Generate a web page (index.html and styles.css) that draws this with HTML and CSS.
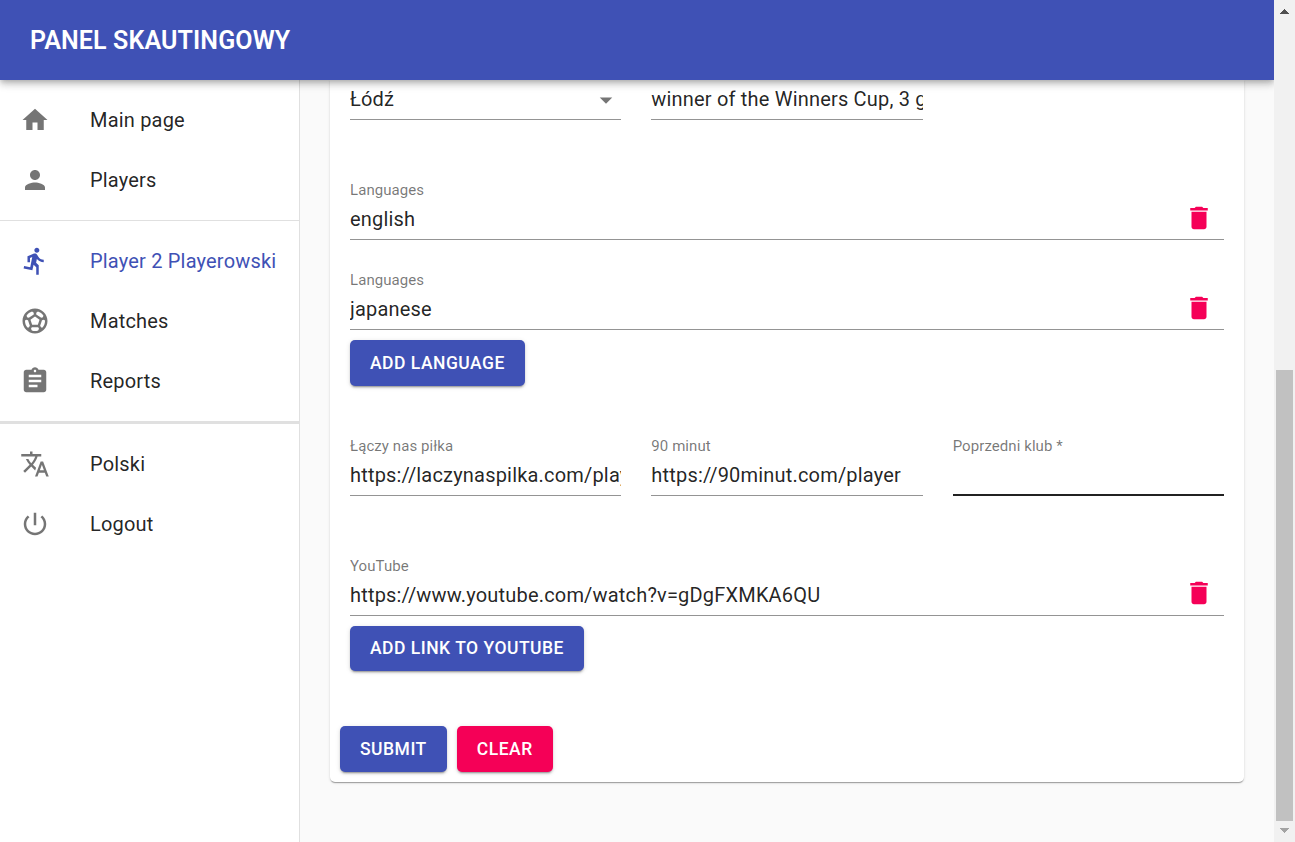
FILE: index.html
```html
<!DOCTYPE html>
<html lang="en">
<head>
<meta charset="utf-8">
<title>Panel skautingowy</title>
<link rel="stylesheet" href="styles.css">
</head>
<body>
<div class="app">
  <div class="viewport">
    <header class="appbar"><h1 class="appbar-title">PANEL SKAUTINGOWY</h1></header>
    <div class="body">
      <nav class="sidebar">
        <ul class="menu">
          <li class="menu-item"><svg class="icon" viewBox="0 0 24 24"><path d="M10 20v-6h4v6h5v-8h3L12 3 2 12h3v8z"/></svg><span>Main page</span></li>
          <li class="menu-item"><svg class="icon" viewBox="0 0 24 24"><path d="M12 12c2.21 0 4-1.79 4-4s-1.79-4-4-4-4 1.79-4 4 1.79 4 4 4zm0 2c-2.67 0-8 1.34-8 4v2h16v-2c0-2.66-5.33-4-8-4z"/></svg><span>Players</span></li>
        </ul>
        <ul class="menu menu-ruled">
          <li class="menu-item menu-item-active"><svg class="icon" viewBox="0 0 24 24"><path d="M13.49 5.48c1.1 0 2-.9 2-2s-.9-2-2-2-2 .9-2 2 .9 2 2 2zm-3.6 13.9l1-4.4 2.1 2v6h2v-7.5l-2.1-2 .6-3c1.3 1.5 3.3 2.5 5.5 2.5v-2c-1.9 0-3.5-1-4.3-2.4l-1-1.6c-.4-.6-1-1-1.7-1-.3 0-.5.1-.8.1l-5.2 2.2v4.7h2v-3.4l1.8-.7-1.6 8.1-4.9-1-.4 2 7 1.4z"/></svg><span>Player 2 Playerowski</span></li>
          <li class="menu-item"><svg class="icon" viewBox="0 0 24 24"><path d="M12 2C6.48 2 2 6.48 2 12s4.48 10 10 10 10-4.48 10-10S17.52 2 12 2zm1 3.3l1.35-.95c1.82.56 3.37 1.76 4.38 3.34l-.39 1.34-1.35.46L13 6.7V5.3zm-3.35-.95L11 5.3v1.4L7.01 9.49l-1.35-.46-.39-1.34c1.01-1.57 2.56-2.77 4.38-3.34zM7.08 17.11l-1.14.1C4.73 15.81 4 13.99 4 12c0-.12.01-.23.02-.35l1-.73 1.38.48 1.46 4.34-.78 1.37zm7.42 2.48c-.79.26-1.63.41-2.5.41s-1.71-.15-2.5-.41l-.69-1.49.64-1.1h5.11l.64 1.11-.7 1.48zM14.27 15H9.73l-1.35-4.02L12 8.44l3.63 2.54L14.27 15zm3.79 2.21l-1.14-.1-.79-1.37 1.46-4.34 1.39-.47 1 .73c.01.11.02.22.02.34 0 1.99-.73 3.81-1.94 5.21z"/></svg><span>Matches</span></li>
          <li class="menu-item"><svg class="icon" viewBox="0 0 24 24"><path d="M19 3h-4.18C14.4 1.84 13.3 1 12 1c-1.3 0-2.4.84-2.82 2H5c-1.1 0-2 .9-2 2v14c0 1.1.9 2 2 2h14c1.1 0 2-.9 2-2V5c0-1.1-.9-2-2-2zm-7 0c.55 0 1 .45 1 1s-.45 1-1 1-1-.45-1-1 .45-1 1-1zm2 14H7v-2h7v2zm3-4H7v-2h10v2zm0-4H7V7h10v2z"/></svg><span>Reports</span></li>
        </ul>
        <ul class="menu menu-ruled-thick">
          <li class="menu-item"><svg class="icon" viewBox="0 0 24 24"><path d="M12.87 15.07l-2.54-2.51.03-.03c1.74-1.94 2.98-4.17 3.71-6.53H17V4h-7V2H8v2H1v1.99h11.17C11.5 7.92 10.44 9.75 9 11.35 8.07 10.32 7.3 9.19 6.69 8h-2c.73 1.63 1.73 3.17 2.98 4.56l-5.09 5.02L4 19l5-5 3.11 3.11.76-2.04zM18.5 10h-2L12 22h2l1.12-3h4.75L21 22h2l-4.5-12zm-2.62 7l1.62-4.33L19.12 17h-3.24z"/></svg><span>Polski</span></li>
          <li class="menu-item"><svg class="icon" viewBox="0 0 24 24"><path d="M13 3h-2v10h2V3zm4.83 2.17l-1.42 1.42C17.99 7.86 19 9.81 19 12c0 3.87-3.13 7-7 7s-7-3.13-7-7c0-2.19 1.01-4.14 2.58-5.42L6.17 5.17C4.23 6.82 3 9.26 3 12c0 4.97 4.03 9 9 9s9-4.03 9-9c0-2.74-1.23-5.18-3.17-6.83z"/></svg><span>Logout</span></li>
        </ul>
      </nav>
      <main class="content">
        <form class="card">
          <div class="columns">
            <div class="input"><span class="value">Łódź</span><svg class="icon" viewBox="0 0 24 24"><path d="M7 10l5 5 5-5z"/></svg></div>
            <div class="input"><span class="value">winner of the Winners Cup, 3 goals</span></div>
          </div>
          <section class="group">
            <div class="field"><label class="label">Languages</label><div class="input"><span class="value">english</span><svg class="icon icon-delete" viewBox="0 0 24 24"><path d="M6 19c0 1.1.9 2 2 2h8c1.1 0 2-.9 2-2V7H6v12zM19 4h-3.500l-1-1h-5l-1 1H5v2h14V4z"/></svg></div></div>
            <div class="field field-next"><label class="label">Languages</label><div class="input"><span class="value">japanese</span><svg class="icon icon-delete" viewBox="0 0 24 24"><path d="M6 19c0 1.1.9 2 2 2h8c1.1 0 2-.9 2-2V7H6v12zM19 4h-3.500l-1-1h-5l-1 1H5v2h14V4z"/></svg></div></div>
            <button class="button button-add" type="button">ADD LANGUAGE</button>
          </section>
          <div class="columns columns-links">
            <div class="field"><label class="label">Łączy nas piłka</label><div class="input"><span class="value">https://laczynaspilka.com/player</span></div></div>
            <div class="field"><label class="label">90 minut</label><div class="input"><span class="value">https://90minut.com/player</span></div></div>
            <div class="field"><label class="label">Poprzedni klub *</label><div class="input input-hover"><span class="value"></span></div></div>
          </div>
          <section class="group">
            <div class="field"><label class="label">YouTube</label><div class="input"><span class="value">https://www.youtube.com/watch?v=gDgFXMKA6QU</span><svg class="icon icon-delete" viewBox="0 0 24 24"><path d="M6 19c0 1.1.9 2 2 2h8c1.1 0 2-.9 2-2V7H6v12zM19 4h-3.500l-1-1h-5l-1 1H5v2h14V4z"/></svg></div></div>
            <button class="button button-add" type="button">ADD LINK TO YOUTUBE</button>
          </section>
          <div class="actions">
            <button class="button" type="button">SUBMIT</button>
            <button class="button button-secondary" type="button">CLEAR</button>
          </div>
        </form>
      </main>
    </div>
  </div>
  <div class="scrollbar">
    <svg class="scroll-arrow" viewBox="0 0 9 5" shape-rendering="crispEdges"><path fill="#505050" d="M4 0h1v1h1v1h1v1h1v1h1v1H0V4h1V3h1V2h1V1h1z"/></svg>
    <div class="scroll-thumb"></div>
    <svg class="scroll-arrow" viewBox="0 0 9 5" shape-rendering="crispEdges"><path fill="#a3a3a3" d="M0 0h9v1H8v1H7v1H6v1H5v1H4V4H3V3H2V2H1V1H0z"/></svg>
  </div>
</div>
</body>
</html>
```
FILE: styles.css
```css
* { box-sizing: border-box; }

body {
  margin: 0;
  overflow: hidden;
  background: #fafafa;
  color: rgba(0, 0, 0, 0.87);
  font: 400 20px/1.5 Roboto, "Liberation Sans", sans-serif;
  letter-spacing: 0.00938em;
}

.app { display: flex; height: 842px; }
.viewport { display: flex; flex-direction: column; flex: 1; min-width: 0; overflow: hidden; }

.appbar {
  position: relative;
  z-index: 2;
  display: flex;
  align-items: center;
  flex: none;
  height: 80px;
  padding: 1px 30px 0;
  background: #3f51b5;
  color: #fff;
  box-shadow: 0 2.5px 5px -1.25px rgba(0, 0, 0, 0.2), 0 5px 6.25px rgba(0, 0, 0, 0.14), 0 1.25px 12.5px rgba(0, 0, 0, 0.12);
}
.appbar-title { margin: 0; font-size: 25px; font-weight: 600; line-height: 40px; letter-spacing: 0.005em; }

.body { display: flex; flex: 1; min-height: 0; }

.sidebar { flex: none; width: 300px; background: #fff; border-right: 1px solid #e0e0e0; }
.menu { margin: 0; padding: 10px 0; list-style: none; }
.menu-ruled { border-top: 1px solid #e0e0e0; }
.menu-ruled-thick { border-top: 3px solid #e0e0e0; }
.menu-item { display: flex; align-items: center; gap: 40px; height: 60px; padding: 0 20px; white-space: nowrap; }
.menu-item-active, .menu-item-active .icon { color: #3f51b5; }

.icon { flex: none; width: 30px; height: 30px; fill: currentColor; color: rgba(0, 0, 0, 0.54); }

.content { flex: 1; min-width: 0; padding: 0 30px; }
.card {
  padding: 0 20px 10px;
  background: #fff;
  border-radius: 0 0 5px 5px;
  box-shadow: 0 2px 1px -1px rgba(0, 0, 0, 0.2), 0 1px 1px rgba(0, 0, 0, 0.14), 0 1px 3px rgba(0, 0, 0, 0.12);
}

.columns { display: grid; grid-template-columns: repeat(3, minmax(0, 1fr)); gap: 30px; }
.columns-links { margin-top: 50px; }
.group { padding-top: 60px; }
.field-next { margin-top: 30px; }

.label {
  display: block;
  height: 20px;
  padding-top: 3.2px;
  color: rgba(0, 0, 0, 0.54);
  font-size: 15px;
  line-height: 15px;
  letter-spacing: 0.005em;
  white-space: nowrap;
}
.input { display: flex; align-items: center; height: 40px; border-bottom: 1px solid #949494; }
.input-hover { border-bottom: 2px solid #212121; }
.value { flex: 1; min-width: 0; padding-bottom: 0.5px; overflow: hidden; line-height: 24px; white-space: nowrap; }
.icon-delete { margin: 0 10px 3.5px 0; color: #f50057; }

.button {
  display: block;
  padding: 7.5px 20px;
  border: 0;
  border-radius: 5px;
  background: #3f51b5;
  color: #fff;
  font: 500 17.5px/1.75 Roboto, "Liberation Sans", sans-serif;
  letter-spacing: 0.02857em;
  box-shadow: 0 3px 1px -2px rgba(0, 0, 0, 0.2), 0 2px 2px rgba(0, 0, 0, 0.14), 0 1px 5px rgba(0, 0, 0, 0.12);
}
.button-add { margin-top: 10px; }
.button-secondary { background: #f50057; }
.actions { display: flex; gap: 10px; margin: 55px 0 0 -10px; }

.scrollbar {
  display: flex;
  flex-direction: column;
  align-items: center;
  flex: none;
  width: 21px;
  padding: 9px 0;
  background: #f1f1f1;
}
.scroll-arrow { width: 9px; height: 5px; }
.scroll-thumb { width: 17px; height: 451px; margin: auto 0 7px; background: #c1c1c1; }
```
